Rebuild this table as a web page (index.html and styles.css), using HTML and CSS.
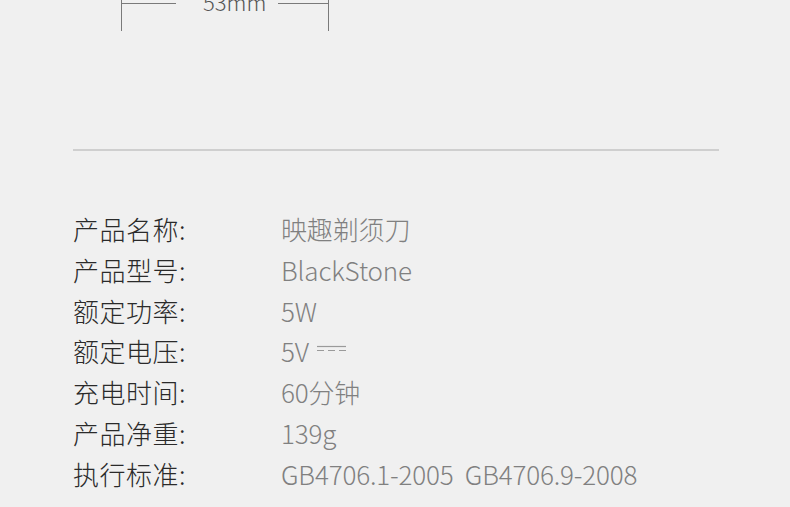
FILE: index.html
```html
<!DOCTYPE html>
<html lang="zh-CN">
<head>
  <meta charset="UTF-8" />
  <meta name="viewport" content="width=device-width, initial-scale=1.0" />
  <title>映趣剃须刀 参数</title>
  <link rel="stylesheet" href="styles.css">
</head>
<body>
  <div class="dimension">
    <div class="dim-row">
      <span class="dim-line dim-left"></span>
      <span class="dim-text">53mm</span>
      <span class="dim-line dim-right"></span>
    </div>
  </div>

  <hr class="divider">

  <dl class="specs">
    <dt>产品名称:</dt>
    <dd>映趣剃须刀</dd>
    <dt>产品型号:</dt>
    <dd>BlackStone</dd>
    <dt>额定功率:</dt>
    <dd>5W</dd>
    <dt>额定电压:</dt>
    <dd>5V
      <svg class="dc" width="29" height="8" viewBox="0 0 29 8">
        <line x1="0" y1="1.5" x2="29" y2="1.5" stroke="#9a9a9a" stroke-width="1.2" />
        <line x1="0" y1="5.5" x2="29" y2="5.5" stroke="#9a9a9a" stroke-width="1.2" stroke-dasharray="7 4" />
      </svg>
    </dd>
    <dt>充电时间:</dt>
    <dd>60分钟</dd>
    <dt>产品净重:</dt>
    <dd>139g</dd>
    <dt>执行标准:</dt>
    <dd>GB4706.1-2005&nbsp;&nbsp;GB4706.9-2008</dd>
  </dl>
</body>
</html>
```

FILE: styles.css
```css
body {
  margin: 0;
  background: #f0f0f0;
  font-family: "Noto Sans CJK SC", "Noto Sans", sans-serif;
  overflow: hidden;
}

.dimension {
  margin-top: -10px;
  margin-left: 121px;
  width: 206px;
  height: 41px;
  border-left: 1px solid #7a7a7a;
  border-right: 1px solid #7a7a7a;
}

.dim-row {
  display: flex;
  align-items: center;
  height: 26px;
}

.dim-line {
  height: 1px;
  background: #7a7a7a;
}

.dim-left {
  flex: 0 0 54px;
}

.dim-right {
  flex: 1;
}

.dim-text {
  margin: 0 12px 4px 27px;
  font-size: 22px;
  font-weight: 300;
  color: #555;
  line-height: 26px;
}

.divider {
  margin: 118px 0 0 73px;
  width: 646px;
  height: 2px;
  border: 0;
  background: #cfcfcf;
}

.specs {
  display: grid;
  grid-template-columns: 208px 1fr;
  margin: 58px 0 0 73px;
  font-size: 26px;
  line-height: 40.8px;
}

.specs dt {
  color: #2a2a2a;
  font-weight: 300;
  letter-spacing: 0.5px;
}

.specs dd {
  margin: 0;
  color: #808080;
  font-weight: 300;
  letter-spacing: -0.15px;
}

.dc {
  margin-left: 2px;
  vertical-align: 9px;
}
```
